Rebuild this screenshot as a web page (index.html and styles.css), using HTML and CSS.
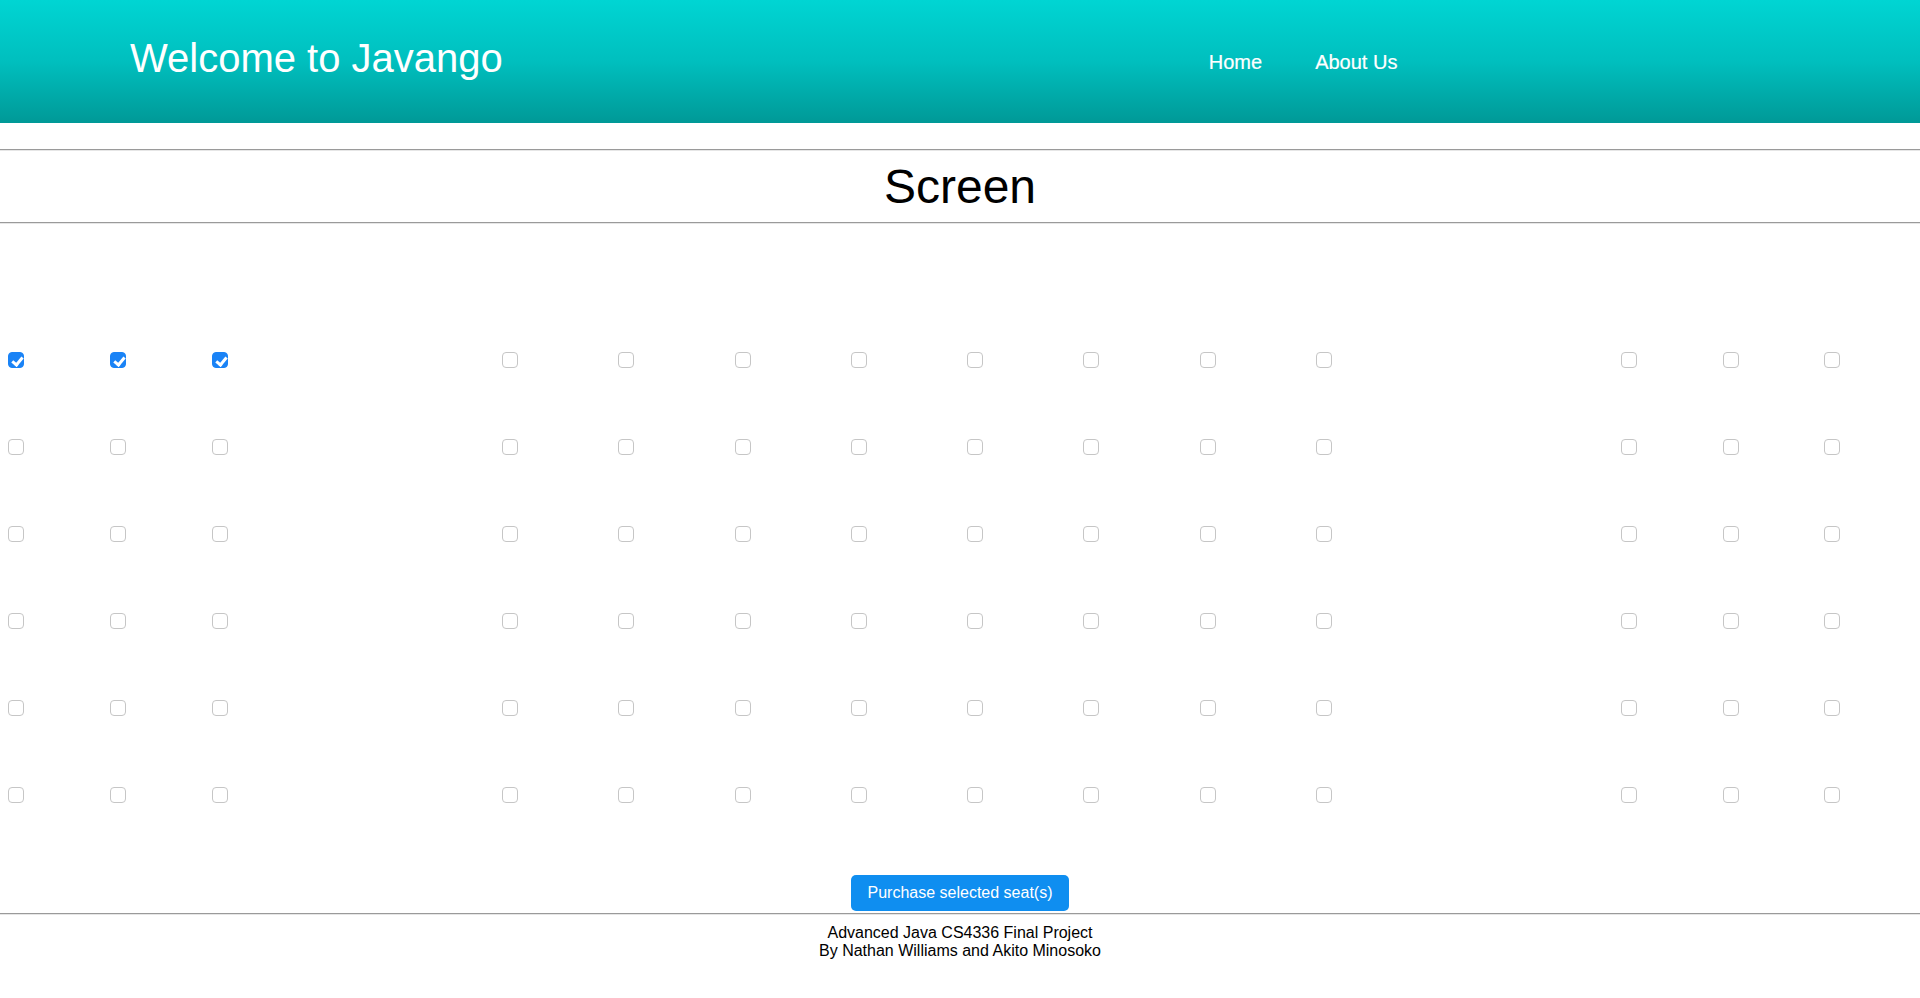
FILE: index.html
```html
<!DOCTYPE html>
<html lang="en">
<head>
<meta charset="utf-8">
<title>Javango</title>
<link rel="stylesheet" href="styles.css">
</head>
<body>
<header class="topbar">
  <h1 class="brand">Welcome to Javango</h1>
  <nav class="nav">
    <a class="nav-link" href="#">Home</a>
    <a class="nav-link" href="#">About Us</a>
  </nav>
</header>
<hr class="rule rule-first">
<h2 class="screen">Screen</h2>
<hr class="rule">
<form class="seating">
  <div class="seat-grid">
    <input type="checkbox" class="seat" checked><input type="checkbox" class="seat" checked><input type="checkbox" class="seat" checked>
    <input type="checkbox" class="seat"><input type="checkbox" class="seat"><input type="checkbox" class="seat"><input type="checkbox" class="seat"><input type="checkbox" class="seat"><input type="checkbox" class="seat"><input type="checkbox" class="seat"><input type="checkbox" class="seat">
    <input type="checkbox" class="seat"><input type="checkbox" class="seat"><input type="checkbox" class="seat">

    <input type="checkbox" class="seat"><input type="checkbox" class="seat"><input type="checkbox" class="seat">
    <input type="checkbox" class="seat"><input type="checkbox" class="seat"><input type="checkbox" class="seat"><input type="checkbox" class="seat"><input type="checkbox" class="seat"><input type="checkbox" class="seat"><input type="checkbox" class="seat"><input type="checkbox" class="seat">
    <input type="checkbox" class="seat"><input type="checkbox" class="seat"><input type="checkbox" class="seat">

    <input type="checkbox" class="seat"><input type="checkbox" class="seat"><input type="checkbox" class="seat">
    <input type="checkbox" class="seat"><input type="checkbox" class="seat"><input type="checkbox" class="seat"><input type="checkbox" class="seat"><input type="checkbox" class="seat"><input type="checkbox" class="seat"><input type="checkbox" class="seat"><input type="checkbox" class="seat">
    <input type="checkbox" class="seat"><input type="checkbox" class="seat"><input type="checkbox" class="seat">

    <input type="checkbox" class="seat"><input type="checkbox" class="seat"><input type="checkbox" class="seat">
    <input type="checkbox" class="seat"><input type="checkbox" class="seat"><input type="checkbox" class="seat"><input type="checkbox" class="seat"><input type="checkbox" class="seat"><input type="checkbox" class="seat"><input type="checkbox" class="seat"><input type="checkbox" class="seat">
    <input type="checkbox" class="seat"><input type="checkbox" class="seat"><input type="checkbox" class="seat">

    <input type="checkbox" class="seat"><input type="checkbox" class="seat"><input type="checkbox" class="seat">
    <input type="checkbox" class="seat"><input type="checkbox" class="seat"><input type="checkbox" class="seat"><input type="checkbox" class="seat"><input type="checkbox" class="seat"><input type="checkbox" class="seat"><input type="checkbox" class="seat"><input type="checkbox" class="seat">
    <input type="checkbox" class="seat"><input type="checkbox" class="seat"><input type="checkbox" class="seat">

    <input type="checkbox" class="seat"><input type="checkbox" class="seat"><input type="checkbox" class="seat">
    <input type="checkbox" class="seat"><input type="checkbox" class="seat"><input type="checkbox" class="seat"><input type="checkbox" class="seat"><input type="checkbox" class="seat"><input type="checkbox" class="seat"><input type="checkbox" class="seat"><input type="checkbox" class="seat">
    <input type="checkbox" class="seat"><input type="checkbox" class="seat"><input type="checkbox" class="seat">
  </div>
  <div class="actions">
    <button type="button" class="purchase">Purchase selected seat(s)</button>
  </div>
</form>
<hr class="rule rule-footer">
<footer class="footer">
  <div class="footer-line">Advanced Java CS4336 Final Project</div>
  <div class="footer-line">By Nathan Williams and Akito Minosoko</div>
</footer>
</body>
</html>
```

FILE: styles.css
```css
html, body {
  margin: 0;
  padding: 0;
  background: #ffffff;
  font-family: "Liberation Sans", Arial, Helvetica, sans-serif;
  color: #000000;
}

.topbar {
  height: 123px;
  box-sizing: border-box;
  background: linear-gradient(to bottom, #00d5d3 0%, #00bfbe 50%, #009997 100%);
  display: flex;
  align-items: flex-start;
  padding-left: 130px;
}

.brand {
  margin: 0;
  padding-top: 35px;
  font-size: 40px;
  line-height: 46px;
  font-weight: normal;
  color: #ffffff;
}

.nav {
  display: flex;
  gap: 53px;
  margin-left: 706px;
  padding-top: 51px;
}

.nav-link {
  color: #ffffff;
  text-decoration: none;
  font-size: 20px;
  line-height: 23px;
  -webkit-text-stroke: 0.2px #ffffff;
}

.rule {
  margin: 0;
  height: 0;
  border: 0;
  border-top: 1px solid #9a9a9a;
  border-bottom: 1px solid #e6e6e6;
}

.rule-first {
  margin-top: 26px;
}

.screen {
  margin: 0;
  padding: 8px 0;
  font-size: 48px;
  line-height: 55px;
  font-weight: normal;
  text-align: center;
}

.seating {
  margin: 0;
}

.seat-grid {
  display: grid;
  grid-template-columns: 102px 102px 290px repeat(7, 116.3px) 305px 101.5px 101.5px 16px;
  grid-auto-rows: 16px;
  row-gap: 71px;
  padding-left: 8px;
  margin-top: 128px;
}

.seat {
  -webkit-appearance: none;
  appearance: none;
  display: block;
  position: relative;
  margin: 0;
  width: 16px;
  height: 16px;
  box-sizing: border-box;
  border: 1px solid #c6c6c6;
  border-radius: 4px;
  background: #ffffff;
}

.seat:checked {
  background: #1a83f6;
  border-color: #1a83f6;
}

.seat:checked::after {
  content: "";
  position: absolute;
  left: 4.5px;
  top: 1.5px;
  width: 4px;
  height: 8px;
  border-right: 3px solid #ffffff;
  border-bottom: 3px solid #ffffff;
  transform: rotate(40deg);
}

.actions {
  display: flex;
  justify-content: center;
  margin-top: 72px;
  margin-bottom: 2px;
}

.purchase {
  font-family: "Liberation Sans", Arial, Helvetica, sans-serif;
  font-size: 16px;
  line-height: 18px;
  color: #ffffff;
  background: #0f8ef0;
  border: 0;
  border-radius: 5px;
  padding: 9px 16px;
  width: 218px;
}

.footer {
  text-align: center;
  padding-top: 9px;
  font-size: 16px;
  line-height: 18px;
}
```
